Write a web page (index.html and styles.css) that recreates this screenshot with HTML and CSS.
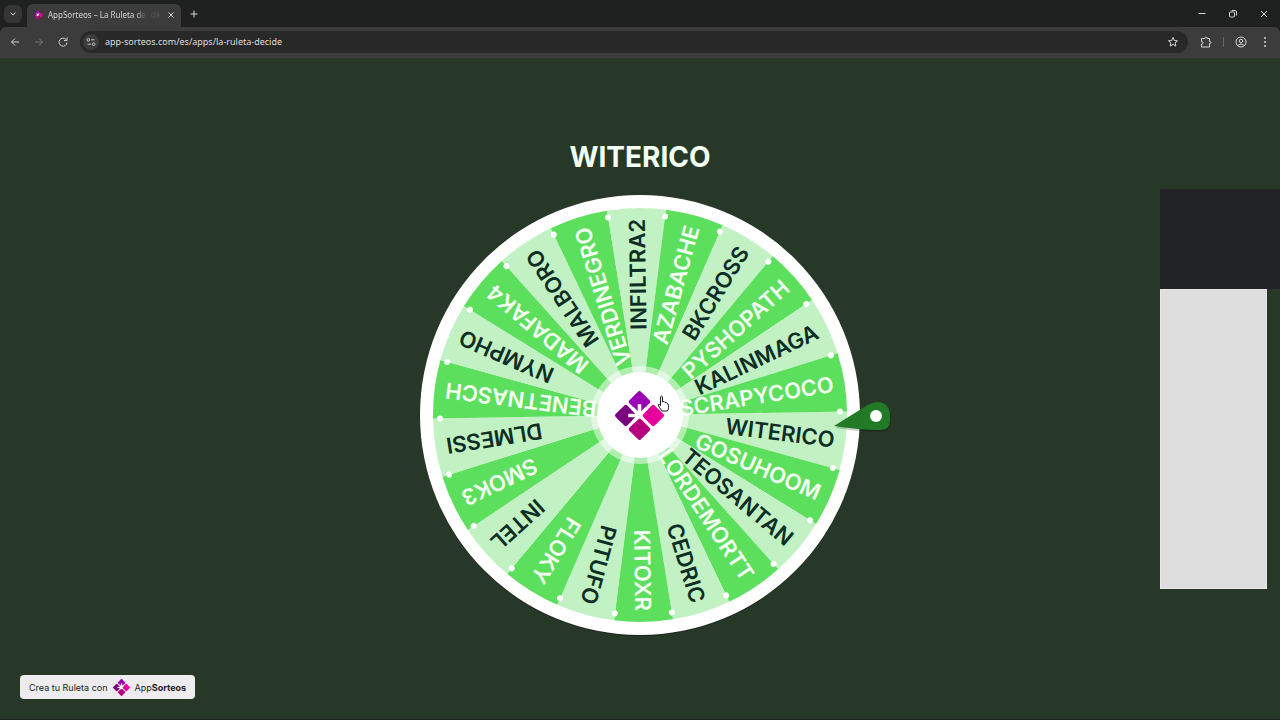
FILE: index.html
```
<!DOCTYPE html>
<html lang="es">
<head>
  <meta charset="UTF-8">
  <meta name="viewport" content="width=device-width, initial-scale=1.0">
  <title>AppSorteos – La Ruleta de</title>
  <link rel="stylesheet" href="styles.css">
</head>
<body>
  <!-- Logo shared by the tab, the wheel and the badge -->
  <svg class="defs" aria-hidden="true">
    <symbol id="logo" viewBox="-24 -24 48 48">
      <g transform="rotate(45)">
        <rect x="-17.5" y="-17.5" width="16" height="16" rx="2" fill="#9a00b4"/>
        <rect x="-17.5" y="1.5" width="16" height="16" rx="2" fill="#7b0080"/>
        <rect x="1.5" y="-17.5" width="16" height="16" rx="2" fill="#e6009c"/>
        <rect x="1.5" y="1.5" width="16" height="16" rx="2" fill="#b8007e"/>
      </g>
      <path d="M0 0V-11M0 0H-11M-7 -7L3 3M-6 6L7 -7" stroke="#fff" stroke-width="3.5" fill="none"/>
    </symbol>
  </svg>

  <!-- Browser bar -->
  <header class="browser">
    <div class="tabs">
      <button class="tab-list" aria-label="Buscar pestañas">
        <svg viewBox="0 0 16 16"><path d="M5.500 6.500L8 9l2.500-2.500"/></svg>
      </button>
      <div class="tab">
        <svg class="tab-logo"><use href="#logo"/></svg>
        <span class="tab-title">AppSorteos – La Ruleta de</span>
        <svg class="sound" viewBox="0 0 16 16"><path d="M2 6h3l3-3v10l-3-3H2zM11 5q2 3 0 6M13 3q3 5 0 10"/></svg>
        <button class="tab-close" aria-label="Cerrar pestaña">
          <svg viewBox="0 0 16 16"><path d="M5.500 5.500l5 5M10.500 5.500l-5 5"/></svg>
        </button>
      </div>
      <button class="icon new-tab" aria-label="Nueva pestaña">
        <svg viewBox="0 0 16 16"><path d="M8 4.500v7M4.500 8h7"/></svg>
      </button>
      <div class="window-buttons">
        <button class="icon" aria-label="Minimizar"><svg viewBox="0 0 16 16"><path d="M4.500 7.500h7"/></svg></button>
        <button class="icon" aria-label="Restaurar"><svg viewBox="0 0 16 16"><rect x="4.500" y="6" width="5" height="5" rx="1"/><path d="M6.500 4.500h3.500q1.500 0 1.500 1.500v3.500"/></svg></button>
        <button class="icon" aria-label="Cerrar"><svg viewBox="0 0 16 16"><path d="M5 5l6 6M11 5l-6 6"/></svg></button>
      </div>
    </div>
    <div class="toolbar">
      <button class="icon" aria-label="Atrás"><svg viewBox="0 0 16 16"><path d="M12 8H4.500M8 4.500L4.500 8L8 11.500"/></svg></button>
      <button class="icon disabled" aria-label="Adelante"><svg viewBox="0 0 16 16"><path d="M4 8h7.500M8 4.500L11.500 8L8 11.500"/></svg></button>
      <button class="icon" aria-label="Recargar"><svg viewBox="0 0 16 16"><path d="M11 5.500A4 4 0 1 0 12 8.500M12 3.500v3H9"/></svg></button>
      <div class="address">
        <button class="site-info" aria-label="Información del sitio">
          <svg viewBox="0 0 16 16"><circle cx="5" cy="5.500" r="1.500"/><path d="M8 5.500h4M4 10.500h4"/><circle cx="11" cy="10.500" r="1.500"/></svg>
        </button>
        <input class="url" type="text" aria-label="Dirección" value="app-sorteos.com/es/apps/la-ruleta-decide">
        <button class="icon" aria-label="Favorito"><svg viewBox="0 0 16 16"><path d="M8 3.500l1.300 3 3.200.3-2.400 2.100.7 3.200L8 10.400l-2.800 1.700.7-3.200-2.400-2.100 3.200-.3z"/></svg></button>
      </div>
      <button class="icon" aria-label="Extensiones"><svg viewBox="0 0 16 16"><path d="M3.500 4.500H7Q7 3 8 3t1 1.500h2.500v3Q13 7.500 13 8.500t-1.500 1V13h-8v-3Q5 10 5 8.700T3.500 7.500z"/></svg></button>
      <span class="divider"></span>
      <button class="icon" aria-label="Perfil"><svg viewBox="0 0 16 16"><circle cx="8" cy="8" r="5"/><circle cx="8" cy="7" r="1.700"/><path d="M4.500 11.500Q8 8.500 11.500 11.500"/></svg></button>
      <button class="icon" aria-label="Menú"><svg class="dots" viewBox="0 0 16 16"><circle cx="8" cy="4" r="1"/><circle cx="8" cy="8" r="1"/><circle cx="8" cy="12" r="1"/></svg></button>
    </div>
  </header>

  <!-- Wheel -->
  <main class="stage">
    <h1 class="winner">WITERICO</h1>
    <svg class="wheel" viewBox="-256 -220 512 444">
      <circle class="shadow" cy="1" r="220"/>
      <circle class="rim" r="220"/>
      <g id="slices"></g>
      <g id="names"></g>
      <circle class="hub-ring" r="49"/>
      <circle class="hub" r="43"/>
      <use href="#logo" x="-25" y="-24" width="49" height="49"/>
      <g class="pointer">
        <path class="pointer-shadow" d="M196 13L226 -7Q233 -11 238 -11C246 -11 251 -4 251 2V8Q251 17 240 17Q220 17 196 13Z"/>
        <path d="M194 11L226 -9Q233 -13 238 -13C246 -13 250 -6 250 0V6Q250 15 240 15Q220 15 194 11Z"/>
        <circle cx="236" cy="1" r="6"/>
      </g>
      <path class="hand" d="M20.500 -10V-17Q20.500 -19 21.500 -19T22.500 -17V-13Q24 -14.500 25 -12.500Q26.500 -13.500 27 -11.500Q28.500 -11.500 28.500 -9.500V-7.500Q28.500 -5 27 -4H22L18.500 -9Q18 -11 19 -11Q20 -10.500 20.500 -9.500Z"/>
    </svg>
    <aside class="side-panel">
      <div class="panel-dark"></div>
      <div class="panel-light"></div>
    </aside>
    <a class="badge" href="#">
      <span>Crea tu Ruleta con</span>
      <svg class="badge-logo"><use href="#logo"/></svg>
      <span>App<b>Sorteos</b></span>
    </a>
  </main>

  <script src="wheel.js"></script>
</body>
</html>
```
FILE: styles.css
```
* {
  margin: 0;
  padding: 0;
  box-sizing: border-box;
}

body {
  font-family: Inter, "Liberation Sans", sans-serif;
  background: #283828;
  color: #fff;
  display: flex;
  flex-direction: column;
  min-height: 100vh;
}

button {
  border: none;
  background: none;
  color: inherit;
}

.defs {
  position: absolute;
  width: 0;
  height: 0;
}

/* Browser bar */
.browser {
  background: #1f2120;
  color: #d5d5d5;
  font-family: "Noto Sans", sans-serif;
}

.browser svg {
  display: block;
  width: 16px;
  height: 16px;
  fill: none;
  stroke: currentColor;
}

.browser .dots {
  fill: currentColor;
  stroke: none;
}

.tabs {
  display: flex;
  align-items: center;
  height: 27px;
  padding: 0 4px;
}

.tab-list {
  display: flex;
  align-items: center;
  justify-content: center;
  width: 18px;
  height: 18px;
  border-radius: 6px;
  background: #353535;
}

.tab {
  display: flex;
  align-items: center;
  align-self: flex-end;
  width: 154px;
  height: 23px;
  margin-left: 5px;
  padding: 0 2px 2px 6px;
  border-radius: 6px 6px 0 0;
  background: #3c3c3c;
}

.browser .tab-logo {
  flex: none;
  width: 10px;
  height: 10px;
  stroke: none;
}

.tab-title {
  flex: 1;
  margin-left: 5px;
  white-space: nowrap;
  font-size: 8px;
  -webkit-mask-image: linear-gradient(to right, #000 88%, transparent);
  mask-image: linear-gradient(to right, #000 88%, transparent);
}

.browser .sound {
  flex: none;
  width: 10px;
  height: 10px;
  margin: 0 3px;
  color: #5c5c5c;
}

.icon {
  display: flex;
  align-items: center;
  justify-content: center;
  flex: none;
  width: 24px;
  height: 24px;
}

.disabled {
  color: #777;
}

.new-tab {
  margin-left: 1px;
}

.window-buttons {
  display: flex;
  gap: 7px;
  margin-left: auto;
}

.toolbar {
  display: flex;
  align-items: center;
  height: 31px;
  padding: 0 3px 2px;
  border-radius: 6px 6px 0 0;
  background: #3c3c3c;
}

.address {
  display: flex;
  align-items: center;
  flex: 1;
  height: 22px;
  margin: 0 6px 0 5px;
  padding: 0 3px;
  border-radius: 11px;
  background: #282828;
}

.site-info {
  display: flex;
  align-items: center;
  justify-content: center;
  width: 16px;
  height: 16px;
  border-radius: 50%;
  background: #3c3c3c;
}

.browser .site-info svg {
  width: 14px;
  height: 14px;
}

.url {
  flex: 1;
  margin-left: 6px;
  border: none;
  outline: none;
  background: none;
  color: #ddd;
  font-family: inherit;
  font-size: 9px;
}

.divider {
  width: 1px;
  height: 10px;
  margin: 0 5px;
  background: #666;
}

/* Wheel */
.stage {
  position: relative;
  flex: 1;
  display: flex;
  flex-direction: column;
  align-items: center;
  justify-content: center;
  border-bottom: 1px solid #1c2420;
}

.winner {
  margin-bottom: 20px;
  font-size: 28px;
  line-height: 36px;
  font-weight: 700;
  color: #f4fff4;
}

.wheel {
  width: 40%;
  min-width: 512px;
  overflow: visible;
}

.shadow {
  fill: #1c271c;
}

.rim,
.hub {
  fill: #fff;
}

.slice-light {
  fill: #c2f1c4;
}

.slice-green {
  fill: #5cdf5c;
}

.pin {
  fill: #fff;
}

.name {
  font-size: 22px;
  font-weight: 600;
  text-anchor: end;
  fill: #f4fff4;
}

.name-dark {
  fill: #0d2e25;
}

.hub-ring {
  fill: rgba(255, 255, 255, 0.5);
}

.pointer path {
  fill: #227a27;
}

.pointer .pointer-shadow {
  fill: rgba(0, 0, 0, 0.2);
}

.pointer circle {
  fill: #fff;
}

.hand {
  fill: #fff;
  stroke: #1b1b2b;
}

/* Panels over the right edge */
.side-panel {
  position: absolute;
  top: 131px;
  right: 0;
  width: 120px;
}

.panel-dark {
  height: 100px;
  background: #212224;
}

.panel-light {
  width: 107px;
  height: 300px;
  border: 1px solid #e8e8e4;
  background: #dedede;
}

/* Badge */
.badge {
  position: absolute;
  left: 20px;
  bottom: 20px;
  display: flex;
  align-items: center;
  gap: 5px;
  height: 24px;
  padding: 0 9px;
  border-radius: 4px;
  background: #eeecee;
  color: #222;
  font-size: 9px;
  text-decoration: none;
}

.badge-logo {
  width: 17px;
  height: 17px;
}
```
FILE: wheel.js
```
const names = [
  'WITERICO', 'GOSUHOOM', 'TEOSANTAN', 'LORDEMORTT', 'CEDRIC', 'KITOXR',
  'PITUFO', 'FLOKY', 'INTEL', 'SMOK3', 'DLMESSI', 'BENETNASCH', 'NYMPHO',
  'MADAFAK4', 'MALBORO', 'VERDINEGRO', 'INFILTRA2', 'AZABACHE', 'BKCROSS',
  'PYSHOPATH', 'KALINMAGA', 'SCRAPYCOCO'
];

const step = 360 / names.length;
const start = 7.2;
const radius = 207;

function add(parent, tag, attrs) {
  const el = document.createElementNS('http://www.w3.org/2000/svg', tag);
  for (const key in attrs) {
    el.setAttribute(key, attrs[key]);
  }
  document.getElementById(parent).appendChild(el);
  return el;
}

// each slice is drawn around the x axis and then rotated
const half = step * Math.PI / 360;
const x = radius * Math.cos(half);
const y = radius * Math.sin(half);

names.forEach(function (name, i) {
  const angle = start + i * step;
  const light = i % 2 === 0;

  add('slices', 'path', {
    class: light ? 'slice-light' : 'slice-green',
    d: `M0 0L${x} ${-y}A${radius} ${radius} 0 0 1 ${x} ${y}Z`,
    transform: `rotate(${angle})`
  });

  add('names', 'circle', {
    class: 'pin',
    cx: 200,
    cy: 0,
    r: 3,
    transform: `rotate(${angle - step / 2})`
  });

  add('names', 'text', {
    class: light ? 'name name-dark' : 'name',
    x: 196,
    y: 8,
    transform: `rotate(${angle})`
  }).textContent = name;
});
```
